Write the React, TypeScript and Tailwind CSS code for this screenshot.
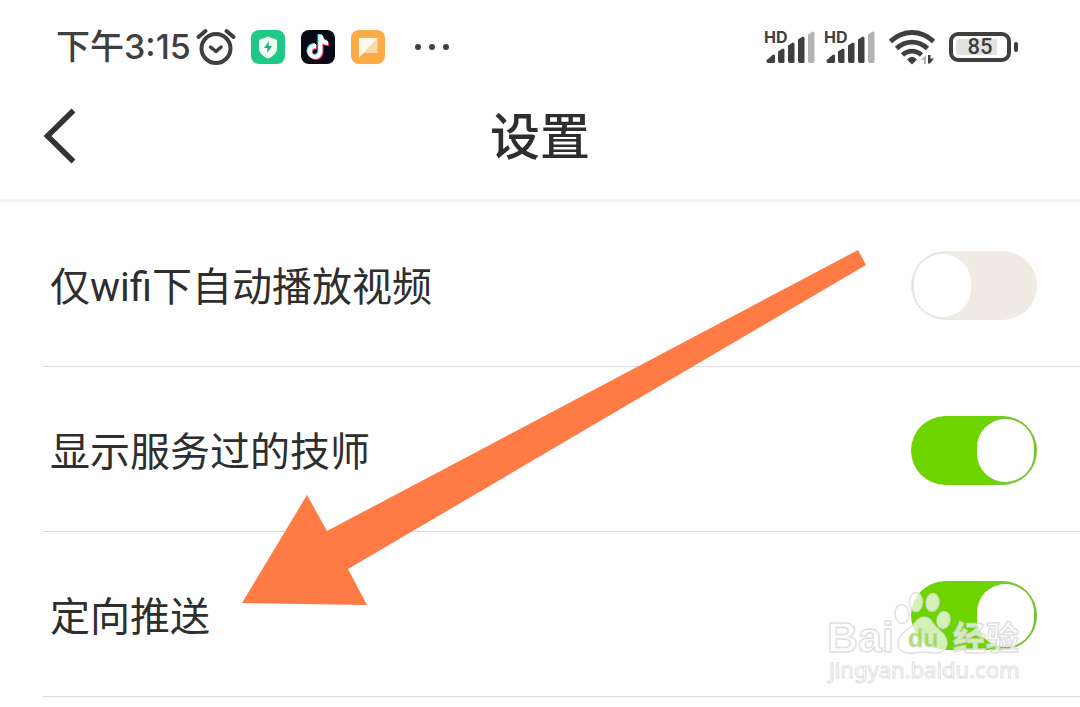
import { useState } from "react";

type Setting = { id: string; label: string; on: boolean };

const SETTINGS: Setting[] = [
  { id: "wifi-autoplay", label: "仅wifi下自动播放视频", on: false },
  { id: "served-staff", label: "显示服务过的技师", on: true },
  { id: "targeted-push", label: "定向推送", on: true },
];

export default function App() {
  const [settings, setSettings] = useState(SETTINGS);

  function toggle(id: string) {
    setSettings((list) => list.map((s) => (s.id === id ? { ...s, on: !s.on } : s)));
  }

  return (
    <div className="relative min-h-screen overflow-hidden bg-[#fefefe] font-['Roboto','Noto_Sans_CJK_SC',sans-serif] text-[#2e2e2e]">
      <StatusBar />

      <header className="grid h-[126px] grid-cols-[1fr_auto_1fr] items-center border-b-3 border-[#f3f3f3] px-10">
        <button type="button" aria-label="返回" className="w-10 pb-1">
          <svg viewBox="0 0 40 56" className="h-14 w-10" fill="none" stroke="#333" strokeWidth="5.500">
            <path d="M33.500 2.500 7.500 28l26 25.500" />
          </svg>
        </button>
        <h1 className="text-[50px] leading-[60px] font-medium">设置</h1>
      </header>

      <main>
        {settings.map((s) => (
          <SettingRow key={s.id} setting={s} onToggle={() => toggle(s.id)} />
        ))}
      </main>

      <Arrow />
      <Watermark />
    </div>
  );
}

function SettingRow({ setting, onToggle }: { setting: Setting; onToggle: () => void }) {
  return (
    <div className="ml-[43px] flex items-center justify-between border-b border-[#dcdcdc] pt-[49px] pr-[43px] pb-[46px] pl-[7px]">
      <label htmlFor={setting.id} className="pt-[5px] text-[40px] leading-[60px]">{setting.label}</label>
      <input
        id={setting.id}
        type="checkbox"
        role="switch"
        checked={setting.on}
        onChange={onToggle}
        className="h-[69px] w-[126px] shrink-0 cursor-pointer appearance-none rounded-full bg-linear-to-r from-[#e8e6e3] from-20% to-[#f0ebe5] to-40% p-[3px] before:block before:h-[63px] before:w-[57px] before:rounded-full before:bg-white checked:from-[#6dd400] checked:from-60% checked:to-[#76c22f] checked:to-80% checked:before:ml-auto"
      />
    </div>
  );
}

function StatusBar() {
  return (
    <div className="flex h-[76px] items-center justify-between pt-[18px] pr-[62px] pl-14 text-[#3f3f3f]">
      <div className="flex items-center gap-4">
        <div className="flex items-center gap-[6px]">
          <span className="font-['Inter','Noto_Sans_CJK_SC',sans-serif] text-[34px] leading-10 font-medium">下午3:15</span>
          <AlarmIcon />
        </div>
        <ShieldAppIcon />
        <TiktokAppIcon />
        <ChatAppIcon />
        <svg viewBox="0 0 64 34" className="h-[34px] w-16" fill="currentColor">
          <circle cx="17" cy="17" r="3" />
          <circle cx="31" cy="17" r="3" />
          <circle cx="45" cy="17" r="3" />
        </svg>
      </div>
      <div className="flex items-center gap-[14px]">
        <div className="flex gap-[9px]">
          <SignalIcon />
          <SignalIcon />
        </div>
        <WifiIcon />
        <Battery level={85} />
      </div>
    </div>
  );
}

function AlarmIcon() {
  return (
    <svg viewBox="1 0 38 38" className="size-[38px] overflow-visible" fill="none" stroke="currentColor" strokeWidth="4" strokeLinecap="round">
      <circle cx="20" cy="20.500" r="14.500" />
      <path d="m14.500 19 5.500 4.500 5-4.500" strokeWidth="3.500" strokeLinejoin="round" />
      <path d="m2.500 9 7-6M30.500 3l7 6" strokeWidth="4" />
    </svg>
  );
}

function ShieldAppIcon() {
  return (
    <svg viewBox="0 0 34 34" className="size-[34px]">
      <rect width="34" height="34" rx="8" fill="#1fc887" />
      <path d="M17 6.500 26 10v8c0 5-4 8.500-9 10.500C12 26.500 8 23 8 18v-8z" fill="#effbf5" />
      <path d="m18 11-5 7h3.500L16 23l5-7h-3.500z" fill="#1fae7b" />
    </svg>
  );
}

function TiktokAppIcon() {
  const note = "M17.500 5h4c.3 3.500 2.500 5.600 5.500 6v4.200c-2 0-4-.7-5.500-1.700v8a7.500 7.500 0 1 1-6.500-7.400v4.300a3.300 3.300 0 1 0 2.500 3.100z";
  return (
    <svg viewBox="0 0 34 34" className="size-[34px]">
      <rect width="34" height="34" rx="8" fill="#0b0915" />
      <path d={note} fill="#4fe5e6" transform="translate(-1 -1)" />
      <path d={note} fill="#f0305c" transform="translate(1 1)" />
      <path d={note} fill="#fff" />
    </svg>
  );
}

function ChatAppIcon() {
  return (
    <svg viewBox="0 0 34 34" className="size-[34px]">
      <rect width="34" height="34" rx="8" fill="#fbac46" />
      <path d="M8 8h18.500v15H13l-5 4.500z" fill="#fdd9a5" />
      <path d="M8 8h18.500L8 27.500z" fill="#fff8ee" />
    </svg>
  );
}

function SignalIcon() {
  return (
    <svg viewBox="0 0 51 34" className="h-[34px] w-[51px] overflow-visible" fill="currentColor">
      <text x="0" y="12.500" fontFamily="Inter" fontSize="16" fontWeight="700">HD</text>
      <path d="M4 29 8.500 25a1.500 1.500 0 0 1 2.500 1.500V31.500a1.500 1.500 0 0 1-1.500 1.500H5a2 2 0 0 1-1-4z" />
      <path d="m14 21.500 4-2.500a1.500 1.500 0 0 1 2.500 1v11.500A1.500 1.500 0 0 1 19 33h-3a2 2 0 0 1-2-2z" />
      <path d="m24 15.500 4-2.500a1.500 1.500 0 0 1 2.500 1v17.500A1.500 1.500 0 0 1 29 33h-3a2 2 0 0 1-2-2z" />
      <path d="m34 9.500 4-2.500a1.500 1.500 0 0 1 2.500 1v23.500A1.500 1.500 0 0 1 39 33h-3a2 2 0 0 1-2-2z" />
      <path d="m44 4.500 4-2.500a1.500 1.500 0 0 1 2.500 1v28.500A1.500 1.500 0 0 1 49 33h-3a2 2 0 0 1-2-2z" fill="#b3b3b3" />
    </svg>
  );
}

function WifiIcon() {
  return (
    <svg viewBox="0 0 46 36" className="h-9 w-[46px]" fill="none" stroke="currentColor" strokeWidth="4.800">
      <path d="M1.500 12.500C14 .500 32 .500 44.500 12.500" />
      <path d="M7.500 19.500c9-8.500 22-8.500 31 0" />
      <path d="M13.500 26c5.500-5.300 13.500-5.300 19 0" />
      <path d="M18 30.500q5-5.500 10 0L23 35.500z" fill="currentColor" stroke="none" />
      <path d="m32 31 5-5v9h-2v-4z" fill="#b3b3b3" stroke="none" />
      <path d="M39 26h2.500v3.500H45l-4 5h-2z" fill="currentColor" stroke="none" />
    </svg>
  );
}

function Battery({ level }: { level: number }) {
  return (
    <div className="flex items-center gap-[3px]">
      <div className="h-[30px] w-[62px] rounded-[9px] border-4 border-current p-[3px]">
        <div className="flex h-4 items-center justify-center rounded-sm bg-linear-to-r from-[#e2e2e2] from-85% to-transparent to-85% text-[22px] leading-4 font-medium">
          {level}
        </div>
      </div>
      <div className="h-[10px] w-1 rounded-sm bg-current" />
    </div>
  );
}

// Pointer laid over the list, aimed at the last setting
function Arrow() {
  return (
    <svg viewBox="0 0 624 355" className="pointer-events-none absolute top-[250px] left-[242px] h-[355px] w-[624px]" fill="#ff7b45">
      <path d="M0 353 65 245l20 36L616 0l8 15-518 304 19 36z" />
    </svg>
  );
}

function Watermark() {
  return (
    <svg
      viewBox="0 0 200 100"
      className="pointer-events-none absolute top-[588px] left-[826px] h-[100px] w-[200px]"
      fill="#fff"
      fillOpacity="0.7"
      stroke="#d8d8d8"
      strokeOpacity="0.8"
      strokeWidth="1.500"
    >
      <text x="1" y="64" fontFamily="Liberation Sans" fontSize="43" fontWeight="700">Bai</text>
      <ellipse cx="76" cy="26" rx="7" ry="9.500" transform="rotate(-6 76 26)" />
      <ellipse cx="90" cy="14" rx="6.500" ry="9.500" />
      <ellipse cx="106.500" cy="14.500" rx="6.500" ry="9" transform="rotate(6 106.500 14.500)" />
      <ellipse cx="117.500" cy="32" rx="6.500" ry="8.500" transform="rotate(10 117.500 32)" />
      <path d="M98 29c-6 0-8 5-12 9-7 5-14 10-14 17 0 7 5 10 12 10 6 0 9-1 14-1s7 1 12 1c7 0 11-4 11-10 0-8-7-12-12-17-4-5-5-9-11-9z" />
      <text x="82" y="59" fontFamily="Liberation Sans" fontSize="25" fontWeight="700" fill="#6dd400" fillOpacity="0.6" strokeWidth="1">du</text>
      <text x="127" y="62" fontFamily="Liberation Sans, Noto Sans CJK SC" fontSize="33" fontWeight="700">经验</text>
      <text x="3" y="90" fontFamily="Noto Sans" fontSize="22" strokeWidth="1">jingyan.baidu.com</text>
    </svg>
  );
}
